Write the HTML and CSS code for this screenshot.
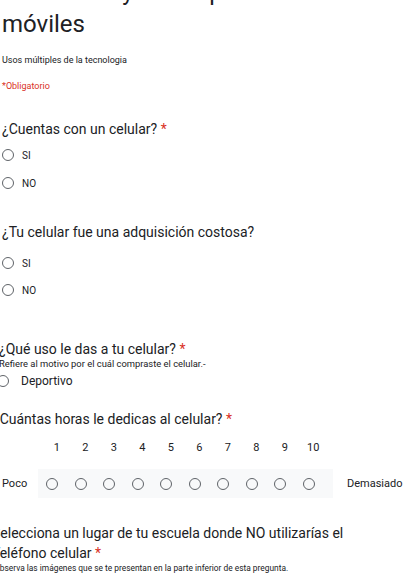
FILE: index.html
```html
<!DOCTYPE html>
<html lang="es">
<head>
<meta charset="utf-8">
<title>Formulario</title>
<link rel="stylesheet" href="styles.css">
</head>
<body>
<main class="form">
  <header class="head">
    <h1 class="title">La Internet y los dispositivos<br>móviles</h1>
    <p class="desc">Usos múltiples de la tecnologia</p>
    <p class="req">*Obligatorio</p>
  </header>

  <section class="q q1">
    <h2 class="q-title">¿Cuentas con un celular? <span class="star">*</span></h2>
    <div class="options">
      <label class="opt"><span class="radio"></span><span class="opt-text">SI</span></label>
      <label class="opt"><span class="radio"></span><span class="opt-text">NO</span></label>
    </div>
  </section>

  <section class="q q2">
    <h2 class="q-title">¿Tu celular fue una adquisición costosa?</h2>
    <div class="options">
      <label class="opt"><span class="radio"></span><span class="opt-text">SI</span></label>
      <label class="opt"><span class="radio"></span><span class="opt-text">NO</span></label>
    </div>
  </section>

  <section class="q q3">
    <h2 class="q-title">¿Qué uso le das a tu celular? <span class="star">*</span></h2>
    <p class="help">Refiere al motivo por el cuál compraste el celular.-</p>
    <div class="options">
      <label class="opt opt-big"><span class="radio"></span><span class="opt-text">Deportivo</span></label>
    </div>
  </section>

  <section class="q q4">
    <h2 class="q-title">¿Cuántas horas le dedicas al celular? <span class="star">*</span></h2>
    <div class="scale">
      <div class="scale-nums">
        <span>1</span><span>2</span><span>3</span><span>4</span><span>5</span>
        <span>6</span><span>7</span><span>8</span><span>9</span><span>10</span>
      </div>
      <div class="scale-row">
        <span class="scale-label">Poco</span>
        <div class="scale-band">
          <span class="cell"><span class="radio"></span></span>
          <span class="cell"><span class="radio"></span></span>
          <span class="cell"><span class="radio"></span></span>
          <span class="cell"><span class="radio"></span></span>
          <span class="cell"><span class="radio"></span></span>
          <span class="cell"><span class="radio"></span></span>
          <span class="cell"><span class="radio"></span></span>
          <span class="cell"><span class="radio"></span></span>
          <span class="cell"><span class="radio"></span></span>
          <span class="cell"><span class="radio"></span></span>
        </div>
        <span class="scale-label scale-label-end">Demasiado</span>
      </div>
    </div>
  </section>

  <section class="q q5">
    <h2 class="q-title">Selecciona un lugar de tu escuela donde NO utilizarías el Teléfono celular <span class="star">*</span></h2>
    <p class="help">Observa las imágenes que se te presentan en la parte inferior de esta pregunta.</p>
  </section>
</main>
</body>
</html>
```

FILE: styles.css
```css
html, body {
  margin: 0;
  padding: 0;
  background: #ffffff;
  overflow: hidden;
}

body {
  font-family: Roboto, "Noto Sans", "Liberation Sans", sans-serif;
  color: #202124;
}

.form {
  padding-left: 2px;
  width: 404px;
}

.head {
  display: flex;
  flex-direction: column;
}

.title {
  margin: -24px 0 0 0;
  font-size: 24px;
  line-height: 32px;
  font-weight: 400;
  color: #202124;
}

.desc {
  margin: 14px 0 0 0;
  font-size: 9px;
  line-height: 12px;
}

.req {
  margin: 14px 0 0 0;
  font-size: 9px;
  line-height: 12px;
  color: #d93025;
}

.q-title {
  margin: 0;
  font-size: 14px;
  line-height: 20px;
  font-weight: 400;
  color: #202124;
}

.star {
  color: #d93025;
}

.options {
  display: flex;
  flex-direction: column;
  gap: 8px;
}

.opt {
  display: flex;
  align-items: center;
  height: 20px;
  gap: 8px;
  font-size: 10px;
}

.opt-big {
  gap: 12px;
  font-size: 12px;
}

.radio {
  display: block;
  width: 10px;
  height: 10px;
  border: 1.5px solid #5f6368;
  border-radius: 50%;
  flex: none;
}

.help {
  margin: 0;
  font-size: 9px;
  line-height: 12px;
}

.q1 { margin-top: 27px; }
.q1 .options { margin-top: 6px; }

.q2 { margin-top: 29px; }
.q2 .options { margin-top: 11px; gap: 7px; }

.q3 { margin-top: 40px; margin-left: -3px; }
.q3 .q-title { line-height: 18px; }
.q3 .help { font-size: 9.4px; }
.q3 .options { margin-top: 1px; margin-left: -2px; }

.q4 { margin-top: 18px; }
.q4 .q-title { margin-left: -9px; }

.scale {
  display: flex;
  flex-direction: column;
  margin-top: 12px;
}

.scale-nums {
  display: grid;
  grid-template-columns: repeat(10, 28.5px);
  margin-left: 40.5px;
  font-size: 11px;
  line-height: 14px;
  text-align: center;
}

.scale-row {
  display: flex;
  align-items: center;
  margin-top: 14px;
  height: 29px;
}

.scale-label {
  width: 36px;
  font-size: 11px;
  flex: none;
}

.scale-label-end {
  width: auto;
  margin-left: 14px;
}

.scale-band {
  display: grid;
  grid-template-columns: repeat(10, 28.5px);
  align-items: center;
  height: 29px;
  padding-right: 10px;
  background: #f8f9fa;
}

.cell {
  display: flex;
  justify-content: center;
  align-items: center;
}

.q5 { margin-top: 25px; margin-left: -10px; }
.q5 .q-title { width: 370px; line-height: 20px; }
.q5 .help { margin-left: 2px; font-size: 8.4px; line-height: 11px; }
```
